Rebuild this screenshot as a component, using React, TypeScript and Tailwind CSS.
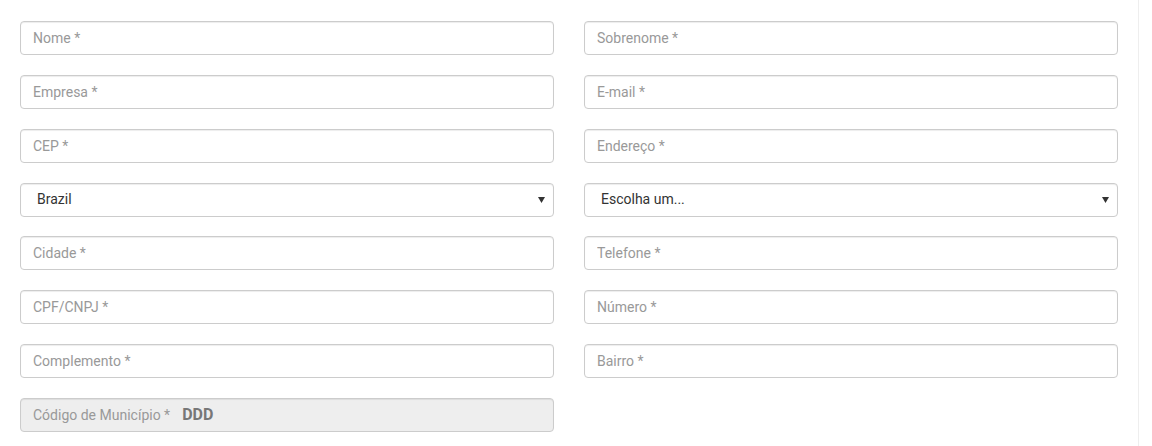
import React from "react";

const inputCls =
  "w-full h-[34px] rounded-[4px] border border-[#ccc] bg-white px-3 text-[14px] text-[#555] placeholder:text-[#999] outline-none shadow-[inset_0_1px_1px_rgba(0,0,0,0.075)]";

function Field({ placeholder }: { placeholder: string }) {
  return <input type="text" placeholder={placeholder} className={inputCls} />;
}

function SelectField({ options }: { options: string[] }) {
  return (
    <div className="relative">
      <select
        defaultValue={options[0]}
        className="w-full h-[34px] appearance-none rounded-[4px] border border-[#ccc] bg-white pl-4 pr-8 text-[14px] text-[#333] outline-none shadow-[inset_0_1px_1px_rgba(0,0,0,0.075)]"
      >
        {options.map((o) => (
          <option key={o}>{o}</option>
        ))}
      </select>
      {/* seta do select */}
      <svg
        className="pointer-events-none absolute right-[9px] top-[14px]"
        width="7"
        height="6"
        viewBox="0 0 7 6"
      >
        <path d="M0 0 H7 L3.5 6 Z" fill="#333" />
      </svg>
    </div>
  );
}

export default function App() {
  return (
    <div
      className="flex min-h-[446px] bg-white"
      style={{ fontFamily: "Roboto, 'Open Sans', sans-serif" }}
    >
      <div className="w-[1139px] border-r border-[#eee] pl-5 pr-5 pt-[21px]">
        <div className="grid grid-cols-2 gap-x-[30px] gap-y-[19.86px] w-[1098px]">
          <Field placeholder="Nome *" />
          <Field placeholder="Sobrenome *" />
          <Field placeholder="Empresa *" />
          <Field placeholder="E-mail *" />
          <Field placeholder="CEP *" />
          <Field placeholder="Endereço *" />
          <SelectField options={["Brazil", "Argentina", "Portugal"]} />
          <SelectField options={["Escolha um...", "SP", "RJ", "MG"]} />
          <Field placeholder="Cidade *" />
          <Field placeholder="Telefone *" />
          <Field placeholder="CPF/CNPJ *" />
          <Field placeholder="Número *" />
          <Field placeholder="Complemento *" />
          <Field placeholder="Bairro *" />

          {/* campo desabilitado */}
          <div className="flex h-[34px] items-center rounded-[4px] border border-[#ccc] bg-[#eee] px-3 text-[14px] shadow-[inset_0_1px_1px_rgba(0,0,0,0.075)]">
            <span className="text-[#999]">Código de Município *</span>
            <span className="ml-[12px] text-[16px] font-bold text-[#777]">DDD</span>
          </div>
        </div>
      </div>
    </div>
  );
}
